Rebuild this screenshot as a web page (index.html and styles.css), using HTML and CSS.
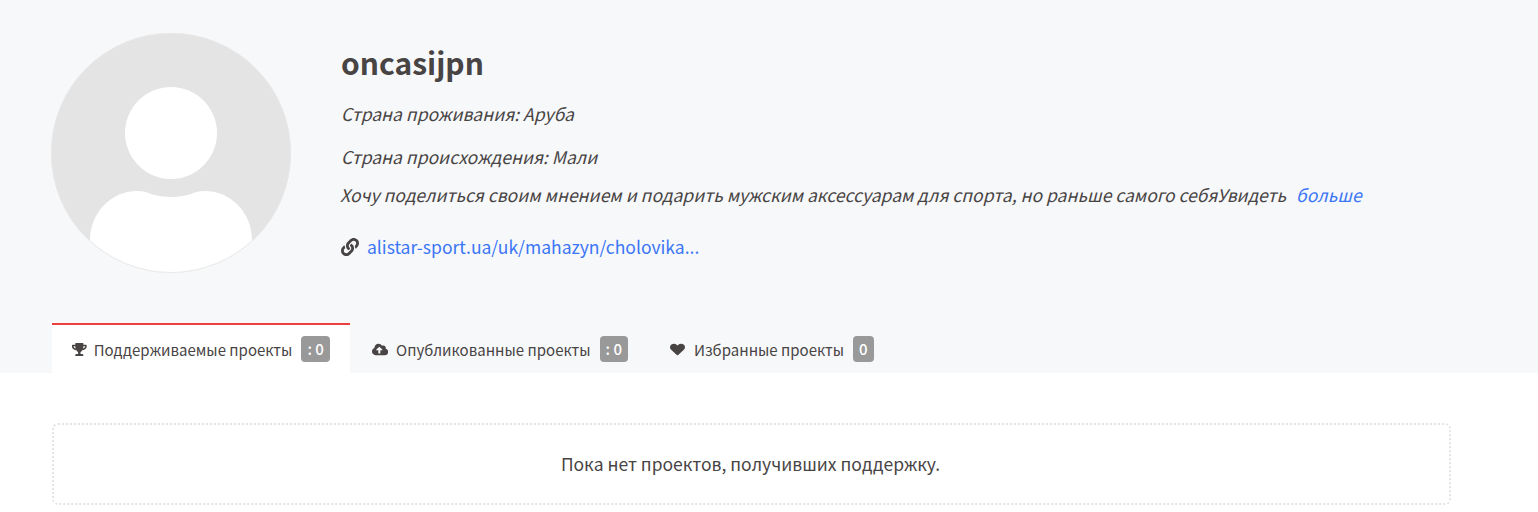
FILE: index.html
```html
<!DOCTYPE html>
<html lang="ru">

<head>
    <meta charset="UTF-8" />
    <meta name="viewport" content="width=device-width, initial-scale=1.0" />
    <title>Профиль</title>
    <link rel="stylesheet" href="styles.css">
</head>

<body>
    <div class="header">
        <div class="profile">
            <svg class="avatar" viewBox="0 0 240 240">
                <defs>
                    <clipPath id="avatar-clip">
                        <circle cx="120" cy="120" r="120" />
                    </clipPath>
                </defs>
                <circle cx="120" cy="120" r="120" fill="#e4e4e4" />
                <circle cx="120" cy="100" r="46" fill="#fff" />
                <path clip-path="url(#avatar-clip)" fill="#fff"
                    d="M39 240V207C39 180 60 158 86 158C92 158 96 159 100 161C112 165 128 165 140 161C144 159 148 158 154 158C180 158 201 180 201 207V240Z" />
                <circle cx="120" cy="120" r="119.5" fill="none" stroke="#e8e8e8" />
            </svg>
            <div class="info">
                <h1 class="username">oncasijpn</h1>
                <p class="country">Страна проживания: Аруба</p>
                <p class="country">Страна происхождения: Мали</p>
                <p class="about">Хочу поделиться своим мнением и подарить мужским аксессуарам для спорта, но раньше самого себяУвидеть <a class="more" href="#">больше</a></p>
                <p class="site">
                    <svg class="link-icon" viewBox="0 0 512 512">
                        <path d="M326.612 185.391c59.747 59.809 58.927 155.698.36 214.59-.11.12-.24.25-.36.37l-67.2 67.2c-59.27 59.27-155.699 59.262-214.96 0-59.27-59.26-59.27-155.7 0-214.96l37.106-37.106c9.84-9.84 26.786-3.3 27.294 10.606.648 17.722 3.826 35.527 9.69 52.721 1.986 5.822.567 12.262-3.783 16.612l-13.087 13.087c-28.026 28.026-28.905 73.66-1.155 101.96 28.024 28.579 74.086 28.749 102.325.51l67.2-67.19c28.191-28.191 28.073-73.757 0-101.83-3.701-3.694-7.429-6.564-10.341-8.569a16.037 16.037 0 0 1-6.947-12.606c-.396-10.567 3.348-21.456 11.698-29.806l21.054-21.055c5.521-5.521 14.182-6.199 20.584-1.731a152.482 152.482 0 0 1 20.522 17.197zM467.547 44.449c-59.261-59.262-155.69-59.27-214.96 0l-67.2 67.2c-.12.12-.25.25-.36.37-58.566 58.892-59.387 154.781.36 214.59a152.454 152.454 0 0 0 20.521 17.196c6.402 4.468 15.064 3.789 20.584-1.731l21.054-21.055c8.35-8.35 12.094-19.239 11.698-29.806a16.037 16.037 0 0 0-6.947-12.606c-2.912-2.005-6.64-4.875-10.341-8.569-28.073-28.073-28.191-73.639 0-101.83l67.2-67.19c28.239-28.239 74.3-28.069 102.325.51 27.75 28.3 26.872 73.934-1.155 101.96l-13.087 13.087c-4.35 4.35-5.769 10.79-3.783 16.612 5.864 17.194 9.042 34.999 9.69 52.721.509 13.906 17.454 20.446 27.294 10.606l37.106-37.106c59.271-59.259 59.271-155.699.001-214.959z" />
                    </svg>
                    <a class="site-link" href="#">alistar-sport.ua/uk/mahazyn/cholovika...</a>
                </p>
            </div>
        </div>
        <div class="tabs">
            <a class="tab active" href="#">
                <svg class="tab-icon" viewBox="0 0 576 512">
                    <path d="M552 64H448V24c0-13.3-10.7-24-24-24H152c-13.3 0-24 10.7-24 24v40H24C10.7 64 0 74.7 0 88v56c0 35.7 22.5 72.4 61.9 100.7 31.5 22.7 69.8 37.1 110 41.7C203.3 338.5 240 360 240 360v72h-48c-35.3 0-64 20.7-64 56v12c0 6.6 5.4 12 12 12h296c6.6 0 12-5.4 12-12v-12c0-35.3-28.7-56-64-56h-48v-72s36.7-21.5 68.1-73.6c40.3-4.6 78.6-19 110-41.7 39.3-28.3 61.9-65 61.9-100.7V88c0-13.3-10.7-24-24-24zM99.3 192.8C74.9 175.2 64 155.6 64 144v-16h64.2c1 32.6 5.8 61.2 12.8 86.2-15.1-5.2-29.2-12.4-41.7-21.4zM512 144c0 16.1-17.7 36.1-35.3 48.8-12.5 9-26.7 16.2-41.8 21.4 7-25 11.8-53.6 12.8-86.2H512v16z" />
                </svg>
                <span>Поддерживаемые проекты</span>
                <span class="badge">: 0</span>
            </a>
            <a class="tab tab-upload" href="#">
                <svg class="tab-icon" viewBox="0 0 640 512">
                    <path d="M537.6 226.6c4.1-10.7 6.4-22.4 6.4-34.6 0-53-43-96-96-96-19.7 0-38.1 6-53.3 16.2C367 64.2 315.3 32 256 32c-88.4 0-160 71.6-160 160 0 2.7.1 5.4.2 8.1C40.2 219.8 0 273.2 0 336c0 79.5 64.5 144 144 144h368c70.7 0 128-57.3 128-128 0-61.9-44-113.6-102.4-125.4zM393.4 288H328v112c0 8.8-7.2 16-16 16h-48c-8.8 0-16-7.2-16-16V288h-65.4c-14.3 0-21.4-17.2-11.3-27.3l105.4-105.4c6.2-6.2 16.4-6.2 22.6 0l105.4 105.4c10.1 10.1 2.9 27.3-11.3 27.3z" />
                </svg>
                <span>Опубликованные проекты</span>
                <span class="badge">: 0</span>
            </a>
            <a class="tab" href="#">
                <svg class="tab-icon heart-icon" viewBox="0 0 512 512" preserveAspectRatio="none">
                    <path d="M462.3 62.6C407.5 15.9 326 24.3 275.7 76.2L256 96.5l-19.7-20.3C186.1 24.3 104.5 15.9 49.7 62.6c-62.8 53.6-66.1 149.8-9.9 207.9l193.5 199.8c12.5 12.9 32.8 12.9 45.3 0l193.5-199.8c56.3-58.1 53-154.3-9.8-207.9z" />
                </svg>
                <span>Избранные проекты</span>
                <span class="badge">0</span>
            </a>
        </div>
    </div>
    <div class="content">
        <div class="empty">Пока нет проектов, получивших поддержку.</div>
    </div>
</body>

</html>
```

FILE: styles.css
```css
html,
body {
    margin: 0;
    padding: 0;
    overflow: hidden;
}

body {
    font-family: "Noto Sans CJK SC", "Noto Sans", sans-serif;
    color: #484444;
    background: #fff;
}

a {
    text-decoration: none;
}

p,
h1 {
    margin: 0;
}

.header {
    height: 373px;
    box-sizing: border-box;
    padding: 33px 0 0 52px;
    background: #f7f8fa;
}

.profile {
    display: flex;
    height: 240px;
    margin-left: -1px;
}

.avatar {
    width: 240px;
    height: 240px;
    flex-shrink: 0;
    margin-right: 49px;
}

.info {
    display: flex;
    flex-direction: column;
}

.username {
    font-size: 30px;
    font-weight: 700;
    line-height: 40px;
    height: 40px;
    margin-top: 9px;
    margin-left: 1px;
}

.country {
    font-size: 17.5px;
    font-style: italic;
    line-height: 24px;
    margin-left: 1px;
}

.username + .country {
    margin-top: 20px;
}

.country + .country {
    margin-top: 19px;
}

.about {
    font-size: 17.5px;
    font-style: italic;
    line-height: 24px;
    margin-top: 14px;
}

.more {
    color: #3b76f6;
    margin-left: 6px;
}

.site {
    display: flex;
    align-items: center;
    font-size: 17.5px;
    line-height: 24px;
    margin-top: 28px;
    padding-left: 1px;
}

.link-icon {
    width: 18px;
    height: 18px;
    fill: #484444;
    margin-right: 8px;
}

.site-link {
    color: #3b76f6;
}

.tabs {
    display: flex;
    gap: 2px;
    margin-top: 50px;
    height: 50px;
}

.tab {
    display: flex;
    align-items: center;
    box-sizing: border-box;
    height: 50px;
    padding: 0 20px;
    border-top: 2px solid transparent;
    color: #484444;
    font-size: 15px;
}

.tab.active {
    background: #fff;
    border-top-color: #ec4040;
}

.tab-icon {
    height: 13px;
    width: auto;
    fill: #484444;
    margin-right: 7px;
}

.tab-upload .tab-icon {
    margin-right: 8px;
}

.heart-icon {
    width: 15px;
    margin-right: 9px;
}

.badge {
    display: block;
    margin-left: 9px;
    padding: 0 6px;
    height: 26px;
    line-height: 26px;
    border-radius: 4px;
    background: #999;
    color: #fff;
    font-size: 15px;
    font-weight: 500;
}

.content {
    padding: 50px 87px 0 52px;
}

.empty {
    height: 82px;
    box-sizing: border-box;
    display: flex;
    align-items: center;
    justify-content: center;
    padding: 0 2px 1px 0;
    border: 2px dotted #e4e4e4;
    border-radius: 6px;
    font-size: 17.5px;
}
```
